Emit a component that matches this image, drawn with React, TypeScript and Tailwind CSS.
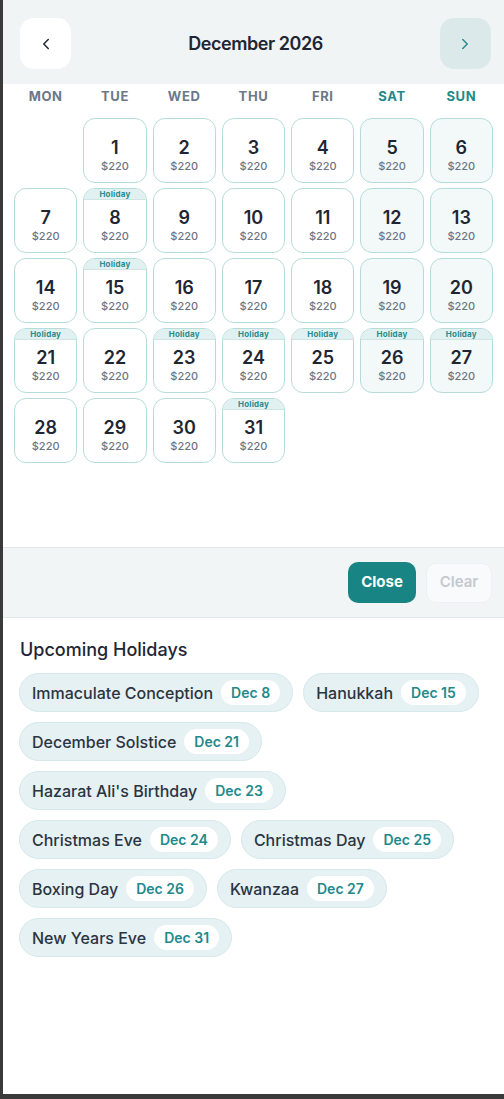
import { ChevronLeft, ChevronRight } from "lucide-react";

const weekdays = ["MON", "TUE", "WED", "THU", "FRI", "SAT", "SUN"];
const holidayDays = [8, 15, 21, 23, 24, 25, 26, 27, 31];

const holidays = [
  { name: "Immaculate Conception", date: "Dec 8" },
  { name: "Hanukkah", date: "Dec 15" },
  { name: "December Solstice", date: "Dec 21" },
  { name: "Hazarat Ali's Birthday", date: "Dec 23" },
  { name: "Christmas Eve", date: "Dec 24" },
  { name: "Christmas Day", date: "Dec 25" },
  { name: "Boxing Day", date: "Dec 26" },
  { name: "Kwanzaa", date: "Dec 27" },
  { name: "New Years Eve", date: "Dec 31" },
];

function DayCell({ day, col }: { day: number; col: number }) {
  const weekend = col >= 5;
  const holiday = holidayDays.includes(day);
  return (
    <div
      className={`relative h-[65px] rounded-[12px] border border-[#b5dcda] overflow-hidden flex flex-col items-center pt-[19px] ${
        weekend ? "bg-[#f3f8f8]" : "bg-white"
      }`}
    >
      {holiday && (
        <div className="absolute top-0 left-0 right-0 h-[11px] bg-[#e1f0f0] border-b border-[#cfe5e4] flex items-center justify-center text-[8px] font-bold tracking-wide text-[#2a8c8c] leading-none">
          Holiday
        </div>
      )}
      <span className="text-[18px] leading-[20px] font-semibold text-[#1f2633]">{day}</span>
      <span className="text-[11px] leading-[14px] font-medium text-[#6b7585] mt-[1px]">$220</span>
    </div>
  );
}

export default function App() {
  const cells: (number | null)[] = [null];
  for (let d = 1; d <= 31; d++) cells.push(d);

  return (
    <div className="h-[1099px] bg-[#3a3a3a] pl-[3px] pb-[5px] font-['Inter',sans-serif]">
      <div className="h-full bg-white flex flex-col">
        <header className="h-[84px] bg-[#f0f4f5] flex items-center justify-between pl-[17px] pr-[13px] pt-[3px]">
          <button className="w-[51px] h-[51px] rounded-[14px] bg-white flex items-center justify-center text-[#1f2633]">
            <ChevronLeft size={18} strokeWidth={2} />
          </button>
          <h1 className="text-[18px] font-semibold text-[#1f2633] tracking-tight">December 2026</h1>
          <button className="w-[51px] h-[51px] rounded-[14px] bg-[#dce9ea] flex items-center justify-center text-[#2d8a8f]">
            <ChevronRight size={18} strokeWidth={2} />
          </button>
        </header>

        <section className="h-[464px] px-[11px] border-b border-[#e2e8ea]">
          <div className="grid grid-cols-7 gap-[6px] h-[26px] items-center">
            {weekdays.map((w, i) => (
              <div
                key={w}
                className={`text-center text-[13px] font-bold tracking-wider ${
                  i >= 5 ? "text-[#1f8a8a]" : "text-[#6b7888]"
                }`}
              >
                {w}
              </div>
            ))}
          </div>
          <div className="grid grid-cols-7 gap-x-[6px] gap-y-[5px] mt-[8px]">
            {cells.map((d, i) =>
              d === null ? <div key={i} /> : <DayCell key={i} day={d} col={i % 7} />
            )}
          </div>
        </section>

        <div className="h-[70px] bg-[#f1f5f6] border-b border-[#e2e8ea] flex items-center justify-end gap-[10px] pr-[12px]">
          <button className="w-[68px] h-[41px] rounded-[10px] bg-[#188484] text-white text-[15px] font-bold">
            Close
          </button>
          <button className="w-[66px] h-[40px] rounded-[10px] bg-[#f8fafb] border border-[#eef1f3] text-[#c3c9cf] text-[15px] font-semibold">
            Clear
          </button>
        </div>

        <section className="px-[16px] pt-[18px]">
          <h2 className="text-[18px] font-medium text-[#1f2633] ml-[1px]">Upcoming Holidays</h2>
          <div className="flex flex-wrap gap-x-[10px] gap-y-[10px] mt-[10px]">
            {holidays.map((h) => (
              <div
                key={h.name}
                className="h-[39px] rounded-full bg-[#e6f1f3] border border-[#d6e8eb] flex items-center pl-[12px] pr-[12px] gap-[8px]"
              >
                <span className="text-[16px] font-medium text-[#2b3441]">{h.name}</span>
                <span className="h-[25px] px-[10px] rounded-full bg-white flex items-center text-[14px] font-semibold text-[#22898a]">
                  {h.date}
                </span>
              </div>
            ))}
          </div>
        </section>
      </div>
    </div>
  );
}
